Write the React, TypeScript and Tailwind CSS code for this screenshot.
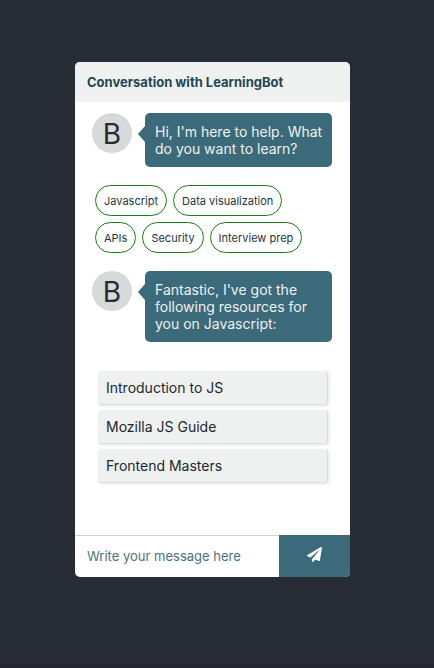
import type { ReactNode } from 'react';
import { FaPaperPlane } from 'react-icons/fa';

const topicRows = [
  ['Javascript', 'Data visualization'],
  ['APIs', 'Security', 'Interview prep'],
];

const resources = ['Introduction to JS', 'Mozilla JS Guide', 'Frontend Masters'];

function BotMessage({ children }: { children: ReactNode }) {
  return (
    <div className="flex items-start gap-[13px] pl-[17px] pr-[18px]">
      <div className="flex size-10 shrink-0 items-center justify-center rounded-full bg-[#d8dad9] pt-px text-[28px] leading-10 text-[#282c34]">
        B
      </div>
      <div className="relative flex-1 rounded-[5px] bg-[#3b6a7a] py-[10px] pl-[10px] pr-1 text-[14px] leading-[17px] text-[#eff1f0]">
        <span className="absolute right-full top-[13px] border-y-[8px] border-r-[7px] border-y-transparent border-r-[#3b6a7a]" />
        {children}
      </div>
    </div>
  );
}

export default function App() {
  return (
    <div className="min-h-screen border-b-4 border-[#24272f] bg-[#282c34] pb-[87px] pl-[75px] pr-[84px] pt-[62px] font-['Inter','Liberation_Sans',sans-serif] text-[#1d3540]">
      <main className="overflow-hidden rounded-[5px] bg-white">
        <header className="bg-[#eff1f0] px-3 py-[10px]">
          <h1 className="text-[13px] font-bold leading-5 text-[#244653]">
            Conversation with LearningBot
          </h1>
        </header>

        <div className="pb-[52px] pt-[11px]">
          <BotMessage>Hi, I'm here to help. What do you want to learn?</BotMessage>

          <div className="flex flex-col gap-[6px] px-5 py-[18px]">
            {topicRows.map((row) => (
              <div key={row[0]} className="flex gap-[6px]">
                {row.map((topic) => (
                  <button
                    key={topic}
                    type="button"
                    className="h-[31px] whitespace-nowrap rounded-full border border-[#158015] px-2 text-[11px] leading-4"
                  >
                    {topic}
                  </button>
                ))}
              </div>
            ))}
          </div>

          <BotMessage>Fantastic, I've got the following resources for you on Javascript:</BotMessage>

          <ul className="mt-[29px] flex flex-col gap-[5px] pl-[23px] pr-[22px]">
            {resources.map((resource) => (
              <li key={resource}>
                <a
                  href="#"
                  className="block rounded-[3px] border-b border-r border-[#d9dcdb] bg-[#eff1f0] px-2 py-2 text-[14px] leading-[17px] text-[#1b2831] shadow-[1px_1px_2px_1px_#eff1f0]"
                >
                  {resource}
                </a>
              </li>
            ))}
          </ul>
        </div>

        <form className="flex h-[42px]" onSubmit={(event) => event.preventDefault()}>
          <input
            type="text"
            aria-label="Message"
            placeholder="Write your message here"
            className="min-w-0 flex-1 border-t border-[#d0d3d2] px-3 text-[13px] outline-none placeholder:text-[#4b7280]"
          />
          <button
            type="submit"
            aria-label="Send"
            className="flex w-[71px] items-center justify-center bg-[#3b6a7a] pb-1 text-white"
          >
            <FaPaperPlane size={15} />
          </button>
        </form>
      </main>
    </div>
  );
}
